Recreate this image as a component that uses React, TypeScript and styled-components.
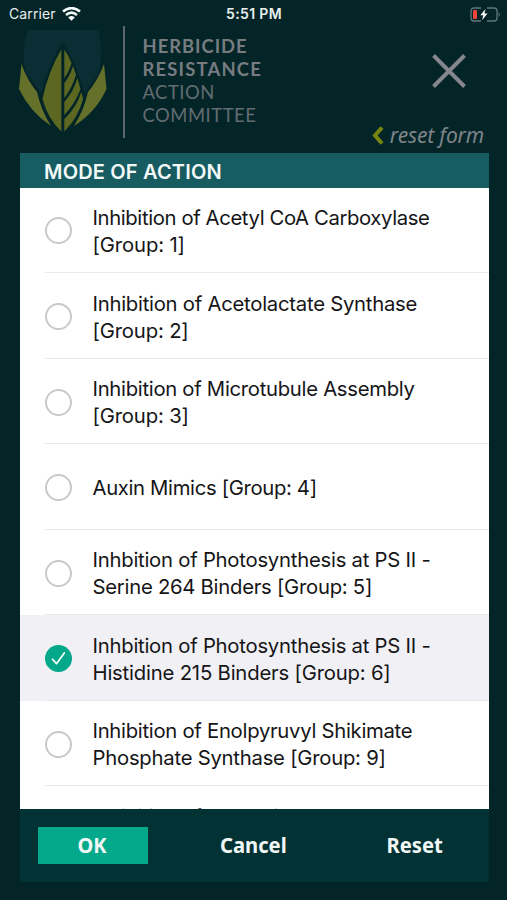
import React, { useState } from "react";
import styled, { createGlobalStyle, css } from "styled-components";

const GlobalStyle = createGlobalStyle`
  *, *::before, *::after { box-sizing: border-box; }
  body { margin: 0; background: #042528; }
  button { border: 0; padding: 0; background: none; color: inherit; font: inherit; cursor: pointer; }
`;

const Screen = styled.div`
  width: 507px;
  height: 900px;
  overflow: hidden;
  display: flex;
  flex-direction: column;
  background: #042528;
  font-family: Inter, "Liberation Sans", sans-serif;
`;

const StatusBar = styled.div`
  height: 26px;
  flex: none;
  display: grid;
  grid-template-columns: 1fr auto 1fr;
  align-items: center;
  padding: 1px 6px 0 9px;
  color: #e9efef;
  font-size: 14px;
  line-height: 26px;
`;

const Carrier = styled.div`
  display: flex;
  align-items: center;
  gap: 6px;
  letter-spacing: 0.12px;
`;

const Clock = styled.div`
  font-weight: 600;
  font-size: 14px;
  letter-spacing: 0.35px;
  margin-right: 2px;
`;

const BatterySlot = styled.div`
  display: flex;
  justify-content: flex-end;
`;

const Header = styled.header`
  height: 127px;
  flex: none;
  display: flex;
  padding-left: 19px;
`;

const Logo = styled.svg`
  display: block;
  flex: none;
  margin-top: 3px;
`;

const Wordmark = styled.div`
  height: 112px;
  margin-left: 16px;
  padding: 9px 0 0 17.5px;
  border-left: 2px solid #5c686d;
  font-family: Lato, sans-serif;
  font-size: 18.4px;
  line-height: 23px;
  width: 170px;
`;

const Word = styled.div<{ $bold?: boolean; $track: number }>`
  font-weight: ${(p) => (p.$bold ? 700 : 400)};
  color: ${(p) => (p.$bold ? "#777c81" : "#626c71")};
  letter-spacing: ${(p) => p.$track}px;
`;

const HeaderActions = styled.div`
  flex: 1;
  display: flex;
  flex-direction: column;
  align-items: flex-end;
  padding-right: 23px;
`;

const CloseButton = styled.button`
  margin: 28px 18px 0 0;
  height: 34px;
`;

const ResetLink = styled.button`
  display: flex;
  align-items: center;
  gap: 6px;
  margin-top: 34px;
  height: 26px;
  white-space: nowrap;
  color: #7f8488;
  font: italic 400 21px/26px "Noto Sans", sans-serif;
  letter-spacing: -0.15px;
`;

const Dialog = styled.section`
  width: 469.5px;
  height: 728.5px;
  margin-left: 19.5px;
  flex: none;
  display: flex;
  flex-direction: column;
  background: #033235;
`;

const DialogTitle = styled.h1`
  margin: 0;
  height: 34.5px;
  flex: none;
  padding: 1.5px 0 0 24.5px;
  background: #175c60;
  color: #f3f8f8;
  font-size: 20px;
  font-weight: 600;
  line-height: 34px;
  letter-spacing: 0.18px;
`;

const OptionList = styled.div`
  height: 621px;
  flex: none;
  overflow: hidden;
  background: #fff;
`;

const Option = styled.div<{ $selected: boolean }>`
  height: 85.55px;
  padding-left: 25px;
  display: flex;
  cursor: pointer;
  ${(p) =>
    p.$selected &&
    css`
      background: #f1f0f5;
    `}
`;

const OptionBody = styled.div`
  flex: 1;
  display: flex;
  align-items: center;
  gap: 21px;
  padding-top: 2.4px;
  border-bottom: 1.5px solid #e9e9ec;
`;

const Radio = styled.span<{ $selected: boolean }>`
  width: 27px;
  height: 27px;
  flex: none;
  display: flex;
  align-items: center;
  justify-content: center;
  border-radius: 50%;
  border: ${(p) => (p.$selected ? "0" : "2px solid #c9c9cb")};
  background: ${(p) => (p.$selected ? "#03a88a" : "transparent")};
`;

const Label = styled.div`
  color: #151517;
  font-size: 20.3px;
  line-height: 27px;
  white-space: nowrap;
`;

const Line = styled.div<{ $track: number }>`
  letter-spacing: ${(p) => p.$track}px;
`;

const Footer = styled.footer`
  flex: 1;
  display: flex;
  padding: 18px 19px 0 18px;
  justify-content: space-between;
`;

const FooterButton = styled.button<{ $primary?: boolean }>`
  width: 110px;
  height: 37px;
  padding-bottom: 3px;
  background: ${(p) => (p.$primary ? "#03a98a" : "transparent")};
  color: #f2f7f7;
  font: 700 22px/34px "Noto Sans", sans-serif;
  text-align: center;
`;

const FooterText = styled.span<{ $scale: number }>`
  display: inline-block;
  transform: scaleX(${(p) => p.$scale});
`;

type OptionData = { id: number; lines: [string, number][] };

const options: OptionData[] = [
  { id: 1, lines: [["Inhibition of Acetyl CoA Carboxylase", -0.38], ["[Group: 1]", -0.12]] },
  { id: 2, lines: [["Inhibition of Acetolactate Synthase", -0.25], ["[Group: 2]", -0.16]] },
  { id: 3, lines: [["Inhibition of Microtubule Assembly", -0.29], ["[Group: 3]", -0.16]] },
  { id: 4, lines: [["Auxin Mimics [Group: 4]", -0.34]] },
  { id: 5, lines: [["Inhbition of Photosynthesis at PS II -", -0.24], ["Serine 264 Binders [Group: 5]", -0.26]] },
  { id: 6, lines: [["Inhbition of Photosynthesis at PS II -", -0.24], ["Histidine 215 Binders [Group: 6]", -0.19]] },
  { id: 9, lines: [["Inhibition of Enolpyruvyl Shikimate", -0.28], ["Phosphate Synthase [Group: 9]", -0.24]] },
  { id: 10, lines: [["Inhibition of Glutamine Synthetase", -0.28], ["\u00a0", 0]] },
];

function HracLogo() {
  return (
    <Logo width="88" height="104" viewBox="19 29 88 104">
      <path d="M28 30H98Q104 48 98 76L82 108H44L27 76Q20 50 28 30Z" fill="#0b2e34" />
      <path d="M18 62L48 102L36 112L18 90ZM107 62L78 102L90 112L107 90Z" fill="#042528" />
      <path d="M21.500 64Q27 80 37 92Q41 110 51 126Q30 112 19 89Z" fill="#65702a" />
      <path d="M104 64Q98 80 88 92Q84 110 74 126Q96 112 106.500 89Z" fill="#65702a" />
      <path d="M62.500 42Q45 70 40 99Q46 119 62.500 133Q80 119 86 99Q80 70 62.500 42Z" fill="#042528" />
      <path d="M61.300 49.500Q48 72 42.500 99Q48 119 61.300 131.500Z" fill="#5c6821" />
      <path d="M64.300 49.500Q69 56 71.500 63Q69 72 64.300 78Z" fill="#5c6821" />
      <path d="M73 66L76 75Q72 88 64.300 98V83Q70 76 73 66Z" fill="#5c6821" />
      <path d="M77.300 78L80.500 89Q75 104 64.300 115V102Q74 91 77.300 78Z" fill="#5c6821" />
      <path d="M81.300 92L83 99Q78 118 64.300 131.500V119Q77 107 81.300 92Z" fill="#5c6821" />
    </Logo>
  );
}

function WifiIcon() {
  return (
    <svg width="19" height="14" viewBox="0 0 19 14" fill="none">
      <path d="M1 4.600Q9.500-2.400 18 4.600" stroke="#f3f8f8" strokeWidth="2.600" />
      <path d="M4 8Q9.500 3.300 15 8" stroke="#f3f8f8" strokeWidth="2.500" />
      <path d="M9.500 13.800L6.200 10.400Q9.500 7.800 12.800 10.400Z" fill="#f3f8f8" />
    </svg>
  );
}

function BatteryIcon() {
  return (
    <svg width="31" height="15" viewBox="0 0 31 15" fill="none">
      <path d="M11 1H4Q1 1 1 4V11Q1 14 4 14H11M17 1H24Q27 1 27 4V11Q27 14 24 14H17" stroke="#60777a" strokeWidth="1.300" />
      <path d="M28.600 5Q31 7.500 28.600 10Z" fill="#60777a" />
      <rect x="3" y="3" width="4" height="9" rx="1" fill="#f04438" />
      <path d="M15.500 2L10.300 8.300H13.300L12 13.300L17.500 6.600H14.400Z" fill="#fff" />
    </svg>
  );
}

export default function App() {
  const [selected, setSelected] = useState(6);
  return (
    <>
      <GlobalStyle />
      <Screen>
        <StatusBar>
          <Carrier>
            Carrier
            <WifiIcon />
          </Carrier>
          <Clock>5:51 PM</Clock>
          <BatterySlot>
            <BatteryIcon />
          </BatterySlot>
        </StatusBar>
        <Header>
          <HracLogo />
          <Wordmark>
            <Word $bold $track={0.98}>HERBICIDE</Word>
            <Word $bold $track={1.2}>RESISTANCE</Word>
            <Word $track={0.5}>ACTION</Word>
            <Word $track={0.55}>COMMITTEE</Word>
          </Wordmark>
          <HeaderActions>
            <CloseButton aria-label="Close">
              <svg width="34" height="34" viewBox="0 0 34 34">
                <path d="M1.500 1.500L32.500 32.500M32.500 1.500L1.500 32.500" stroke="#85878c" strokeWidth="3.900" />
              </svg>
            </CloseButton>
            <ResetLink>
              <svg width="12" height="19" viewBox="0 0 12 19" fill="none">
                <path d="M10 1.500L3 9.500L10 17.500" stroke="#75850f" strokeWidth="4" />
              </svg>
              reset form
            </ResetLink>
          </HeaderActions>
        </Header>
        <Dialog>
          <DialogTitle>MODE OF ACTION</DialogTitle>
          <OptionList role="radiogroup">
            {options.map((o) => (
              <Option
                key={o.id}
                $selected={o.id === selected}
                role="radio"
                aria-checked={o.id === selected}
                onClick={() => setSelected(o.id)}
              >
                <OptionBody>
                  <Radio $selected={o.id === selected}>
                    {o.id === selected && (
                      <svg width="15" height="15" viewBox="0 0 15 15" fill="none">
                        <path d="M1.500 8.300L5.500 12.700L13.300 2" stroke="#fff" strokeWidth="1.700" strokeLinecap="round" strokeLinejoin="round" />
                      </svg>
                    )}
                  </Radio>
                  <Label>
                    {o.lines.map(([text, track]) => (
                      <Line key={text} $track={track}>{text}</Line>
                    ))}
                  </Label>
                </OptionBody>
              </Option>
            ))}
          </OptionList>
          <Footer>
            <FooterButton $primary><FooterText $scale={0.91}>OK</FooterText></FooterButton>
            <FooterButton><FooterText $scale={0.92}>Cancel</FooterText></FooterButton>
            <FooterButton><FooterText $scale={0.92}>Reset</FooterText></FooterButton>
          </Footer>
        </Dialog>
      </Screen>
    </>
  );
}
